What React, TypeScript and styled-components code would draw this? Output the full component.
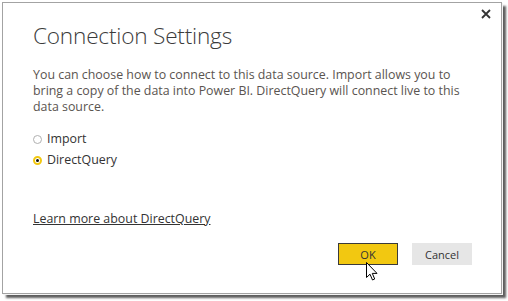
import React from "react";
import styled, { createGlobalStyle } from "styled-components";

const Global = createGlobalStyle`
  html, body { margin: 0; padding: 0; background: #ffffff; }
  #root { width: 508px; height: 301px; }
`;

const Page = styled.div`
  width: 508px;
  height: 301px;
  padding: 2px;
  box-sizing: border-box;
`;

const Frame = styled.div`
  position: relative;
  width: 500px;
  height: 292px;
  box-sizing: border-box;
  border: 1px solid #a3a3a3;
  background: #ffffff;
  box-shadow: 1px 1px 0 #f4f4f4, 4px 4px 2px rgba(40, 40, 40, 0.75);
  display: flex;
  flex-direction: column;
  padding: 0 30px;
  font-family: "Open Sans", "Noto Sans", sans-serif;
`;

const TopBar = styled.div`
  height: 17px;
  display: flex;
  justify-content: flex-end;
  align-items: flex-end;
  margin-right: -21px;
`;

const Close = styled.button`
  width: 12px;
  height: 12px;
  padding: 0;
  border: 0;
  background: transparent;
  display: flex;
  align-items: center;
  justify-content: center;
`;

const Title = styled.h1`
  margin: 1px 0 0 0;
  font-size: 22.6px;
  line-height: 30px;
  font-weight: 300;
  color: #3b3b3b;
  letter-spacing: -0.2px;
`;

const Body = styled.p`
  margin: 16px 0 0 0;
  width: 440px;
  font-size: 12.4px;
  line-height: 16px;
  color: #5a5450;
`;

const Options = styled.div`
  margin-top: 16px;
  display: flex;
  flex-direction: column;
  gap: 5px;
`;

const Option = styled.label`
  display: flex;
  align-items: center;
  gap: 5px;
  font-size: 12.4px;
  line-height: 16px;
  color: #333333;
`;

const Radio = styled.span<{ $checked?: boolean }>`
  width: 9px;
  height: 9px;
  box-sizing: border-box;
  border-radius: 50%;
  border: ${(p) => (p.$checked ? "2px solid #f2c811" : "1px solid #b0b0b0")};
  display: flex;
  align-items: center;
  justify-content: center;
  &::after {
    content: "";
    display: ${(p) => (p.$checked ? "block" : "none")};
    width: 3px;
    height: 3px;
    border-radius: 50%;
    background: #111;
  }
`;

const Link = styled.a`
  margin-top: 43px;
  font-size: 12.4px;
  line-height: 16px;
  color: #333333;
  text-decoration: underline;
  align-self: flex-start;
`;

const Footer = styled.div`
  margin-top: 16px;
  display: flex;
  justify-content: flex-end;
  gap: 14px;
  margin-right: -1px;
`;

const Button = styled.button<{ $primary?: boolean }>`
  position: relative;
  width: 60px;
  height: 22px;
  box-sizing: border-box;
  padding: 0;
  font-family: "Open Sans", "Noto Sans", sans-serif;
  font-size: 11px;
  color: #333;
  background: ${(p) => (p.$primary ? "#f2c811" : "#e6e6e6")};
  border: ${(p) => (p.$primary ? "1px solid #3a3a3a" : "1px solid #e6e6e6")};
`;

const Cursor = styled.svg`
  position: absolute;
  left: 27px;
  top: 18px;
  overflow: visible;
`;

export default function App() {
  return (
    <>
      <Global />
      <Page>
        <Frame>
          <TopBar>
            <Close aria-label="Close">
              <svg width="10" height="10" viewBox="0 0 10 10">
                <path d="M1 1 L9 9 M9 1 L1 9" stroke="#333" strokeWidth="1.8" />
              </svg>
            </Close>
          </TopBar>
          <Title>Connection Settings</Title>
          <Body>
            You can choose how to connect to this data source. Import allows you to bring a copy
            of the data into Power BI. DirectQuery will connect live to this data source.
          </Body>
          <Options>
            <Option>
              <Radio />
              Import
            </Option>
            <Option>
              <Radio $checked />
              DirectQuery
            </Option>
          </Options>
          <Link href="#">Learn more about DirectQuery</Link>
          <Footer>
            <Button $primary>
              OK
              <Cursor width="12" height="19" viewBox="0 0 12 19">
                <path
                  d="M0.5 0.5 L0.5 15.5 L4 12.2 L6.5 18 L8.7 17 L6.3 11.4 L11 11.4 Z"
                  fill="#fff"
                  stroke="#000"
                  strokeWidth="1"
                  strokeLinejoin="miter"
                />
              </Cursor>
            </Button>
            <Button>Cancel</Button>
          </Footer>
        </Frame>
      </Page>
    </>
  );
}
